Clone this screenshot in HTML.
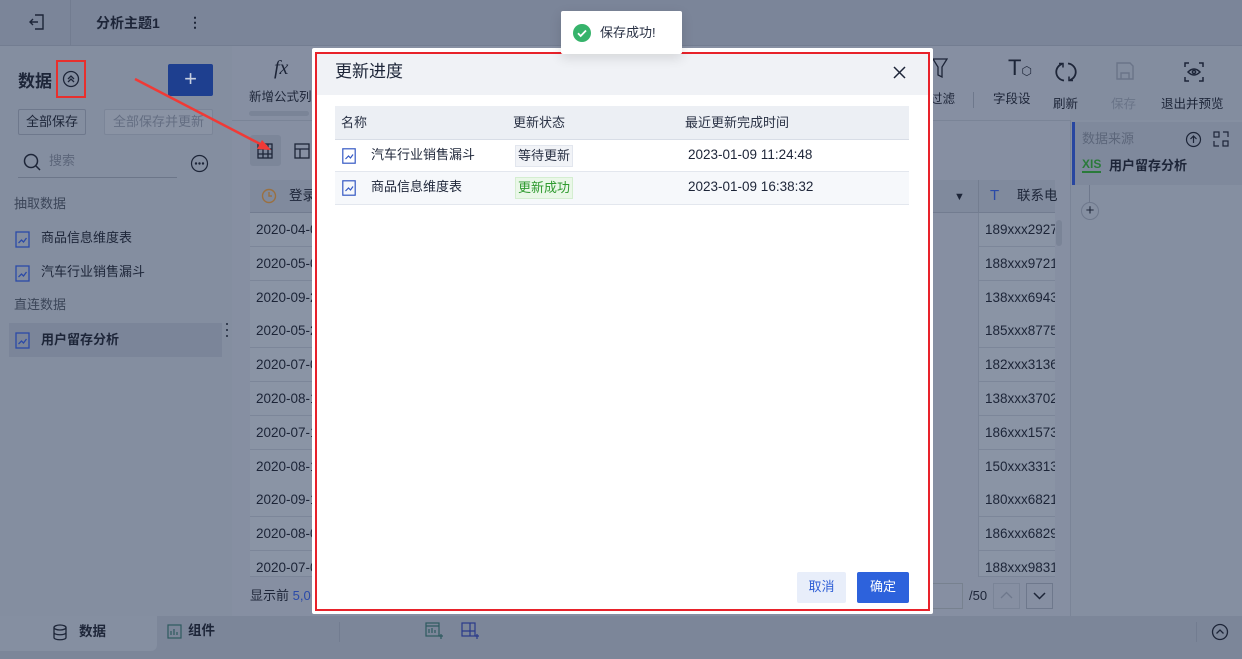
<!DOCTYPE html>
<html><head><meta charset="utf-8"><style>
*{margin:0;padding:0;box-sizing:border-box}
body{width:1242px;height:659px;overflow:hidden;position:relative;background:#838d9f;font-family:"Liberation Sans","Noto Sans CJK SC",sans-serif;font-size:13px;color:#1d2538}
.a{position:absolute;line-height:16px}
.top{left:0;top:0;width:1242px;height:46px;background:#7b8599;border-bottom:1px solid #737d91}
.left{left:0;top:46px;width:232px;height:570px;background:#848ea0}
.main{left:232px;top:46px;width:838px;height:570px;background:#868fa2}
.right{left:1070px;top:120px;width:172px;height:496px;background:#858fa1;border-left:1px solid #7a8497}
.bottom{left:0;top:616px;width:1242px;height:43px;background:#7c8699}
.cell{position:absolute;height:34px;border-bottom:1px solid #7c8699;background:#8a94a5;font-size:13.5px;line-height:33px;padding-left:6px;overflow:hidden;white-space:nowrap;color:#1c2437}
.tb{font-size:12.5px;color:#1d2538;text-align:center}
</style></head><body>
<div class="a top"></div>
<div class="a" style="left:70px;top:0;width:1px;height:46px;background:#727c90"></div>
<svg class="a" style="left:28px;top:13px" width="18" height="18" viewBox="0 0 18 18" fill="none" stroke="#1d2538" stroke-width="1.4"><path d="M7 2h8v14H7M2 9h8M5 6l-3 3 3 3"/></svg>
<div class="a" style="left:96px;top:15px;font-size:14px;font-weight:bold">分析主题1</div>
<div class="a" style="left:188px;top:14px;font-size:14px;font-weight:bold">⋮</div>

<div class="a left"></div>
<div class="a" style="left:18px;top:72px;font-size:17px;font-weight:bold;line-height:20px">数据</div>
<div class="a" style="left:56px;top:60px;width:30px;height:38px;border:2px solid #e8302d"></div>
<svg class="a" style="left:62px;top:70px" width="18" height="18" viewBox="0 0 18 18" fill="none" stroke="#1d2538" stroke-width="1.3"><circle cx="9" cy="9" r="7.5"/><path d="M6 9l3-3 3 3M6 12l3-3 3 3"/></svg>
<div class="a" style="left:168px;top:64px;width:45px;height:32px;background:#1e3f8f;border-radius:2px;color:#c8d0e0;font-size:22px;text-align:center;line-height:30px">+</div>
<div class="a" style="left:18px;top:109px;width:68px;height:26px;border:1px solid #6e788c;border-radius:2px;font-size:13px;line-height:23px;text-align:center">全部保存</div>
<div class="a" style="left:104px;top:109px;width:109px;height:26px;background:#8a93a4;border:1px solid #7b8598;border-radius:2px;font-size:13px;line-height:23px;text-align:center;color:#646e82">全部保存并更新</div>
<svg class="a" style="left:22px;top:152px" width="20" height="20" viewBox="0 0 20 20" fill="none" stroke="#1d2538" stroke-width="1.5"><circle cx="9" cy="9" r="6.5"/><path d="M14 14l4 4"/></svg>
<div class="a" style="left:49px;top:153px;color:#5c667a;font-size:13px">搜索</div>
<div class="a" style="left:18px;top:177px;width:159px;height:1px;background:#6c7689"></div>
<svg class="a" style="left:190px;top:154px" width="19" height="19" viewBox="0 0 19 19" fill="none" stroke="#1d2538" stroke-width="1.2"><circle cx="9.5" cy="9.5" r="8"/><circle cx="6" cy="9.5" r=".6" fill="#1d2538"/><circle cx="9.5" cy="9.5" r=".6" fill="#1d2538"/><circle cx="13" cy="9.5" r=".6" fill="#1d2538"/></svg>
<div class="a" style="left:14px;top:196px;color:#3b4558">抽取数据</div>
<svg class="a" style="left:15px;top:231px" width="15" height="17" viewBox="0 0 15 17" fill="none" stroke="#2b4aa8" stroke-width="1.3"><rect x="1" y="1" width="13" height="15"/><path d="M3.5 12l3-3 2 2 3-4"/></svg>
<div class="a" style="left:41px;top:230px">商品信息维度表</div>
<svg class="a" style="left:15px;top:265px" width="15" height="17" viewBox="0 0 15 17" fill="none" stroke="#2b4aa8" stroke-width="1.3"><rect x="1" y="1" width="13" height="15"/><path d="M3.5 12l3-3 2 2 3-4"/></svg>
<div class="a" style="left:41px;top:264px">汽车行业销售漏斗</div>
<div class="a" style="left:14px;top:297px;color:#3b4558">直连数据</div>
<div class="a" style="left:9px;top:323px;width:213px;height:34px;background:#7b8599"></div>
<svg class="a" style="left:15px;top:332px" width="15" height="17" viewBox="0 0 15 17" fill="none" stroke="#2b4aa8" stroke-width="1.3"><rect x="1" y="1" width="13" height="15"/><path d="M3.5 12l3-3 2 2 3-4"/></svg>
<div class="a" style="left:41px;top:332px;font-weight:bold">用户留存分析</div>
<svg class="a" style="left:225px;top:322px" width="10" height="16" fill="#1d2538"><circle cx="2" cy="2" r="1"/><circle cx="8" cy="2" r="1"/><circle cx="2" cy="8" r="1"/><circle cx="8" cy="8" r="1"/><circle cx="2" cy="14" r="1"/><circle cx="8" cy="14" r="1"/></svg>

<div class="a main"></div>
<div class="a" style="left:232px;top:120px;width:838px;height:1px;background:#7a8497"></div>
<div class="a" style="left:274px;top:58px;font-size:20px;font-style:italic;font-family:'Liberation Serif',serif;color:#1d2538;line-height:20px">fx</div>
<div class="a tb" style="left:249px;top:89px">新增公式列</div>
<div class="a" style="left:249px;top:111px;width:60px;height:5px;background:#7a8497;border-radius:3px"></div>
<div class="a" style="left:250px;top:135px;width:31px;height:31px;background:#7c8699;border-radius:3px"></div>
<svg class="a" style="left:257px;top:143px" width="16" height="16" viewBox="0 0 16 16" fill="none" stroke="#1d2538" stroke-width="1.3"><rect x="1" y="1" width="14" height="14"/><path d="M1 6h14M1 11h14M6 1v14M11 1v14"/></svg>
<svg class="a" style="left:294px;top:143px" width="16" height="16" viewBox="0 0 16 16" fill="none" stroke="#1d2538" stroke-width="1.3"><rect x="1" y="1" width="14" height="14"/><path d="M1 6h14M6 6v9"/></svg>
<div class="a" style="left:250px;top:180px;width:805px;height:33px;background:#808a9d;border-bottom:1px solid #727c90"></div>
<svg class="a" style="left:261px;top:188px" width="16" height="16" viewBox="0 0 16 16" fill="none" stroke="#9a7040" stroke-width="1.4"><circle cx="8" cy="8" r="6.5"/><path d="M8 4v4h3"/></svg>
<div class="a" style="left:289px;top:188px;font-size:13.5px">登录</div>
<div class="a" style="left:954px;top:189px;font-size:11px">▼</div>
<div class="a" style="left:978px;top:180px;width:1px;height:33px;background:#737d90"></div>
<div class="a" style="left:990px;top:188px;font-size:15px;color:#2b4aa8">T</div>
<div class="a" style="left:1017px;top:188px;font-size:13.5px">联系电</div>

<div class="cell" style="left:250px;top:213px;width:64px">2020-04-0</div>
<div class="cell" style="left:250px;top:247px;width:64px">2020-05-0</div>
<div class="cell" style="left:250px;top:281px;width:64px">2020-09-2</div>
<div class="cell" style="left:250px;top:314px;width:64px">2020-05-2</div>
<div class="cell" style="left:250px;top:348px;width:64px">2020-07-0</div>
<div class="cell" style="left:250px;top:382px;width:64px">2020-08-1</div>
<div class="cell" style="left:250px;top:416px;width:64px">2020-07-1</div>
<div class="cell" style="left:250px;top:450px;width:64px">2020-08-1</div>
<div class="cell" style="left:250px;top:483px;width:64px">2020-09-1</div>
<div class="cell" style="left:250px;top:517px;width:64px">2020-08-0</div>
<div class="cell" style="left:250px;top:551px;width:64px;height:26px">2020-07-0</div>

<div class="cell" style="left:979px;top:213px;width:76px">189xxx2927</div>
<div class="cell" style="left:979px;top:247px;width:76px">188xxx9721</div>
<div class="cell" style="left:979px;top:281px;width:76px">138xxx6943</div>
<div class="cell" style="left:979px;top:314px;width:76px">185xxx8775</div>
<div class="cell" style="left:979px;top:348px;width:76px">182xxx3136</div>
<div class="cell" style="left:979px;top:382px;width:76px">138xxx3702</div>
<div class="cell" style="left:979px;top:416px;width:76px">186xxx1573</div>
<div class="cell" style="left:979px;top:450px;width:76px">150xxx3313</div>
<div class="cell" style="left:979px;top:483px;width:76px">180xxx6821</div>
<div class="cell" style="left:979px;top:517px;width:76px">186xxx6829</div>
<div class="cell" style="left:979px;top:551px;width:76px;height:26px">188xxx9831</div>
<div class="a" style="left:978px;top:213px;width:1px;height:364px;background:#7a8497"></div>
<div class="a" style="left:1056px;top:220px;width:6px;height:26px;background:#7a8497;border-radius:3px"></div>
<div class="a" style="left:250px;top:588px;font-size:13px">显示前 <span style="color:#2b4aa8">5,0</span></div>
<div class="a" style="left:930px;top:583px;width:33px;height:26px;border:1px solid #77818f;border-left:none"></div>
<div class="a" style="left:969px;top:588px">/50</div>
<div class="a" style="left:993px;top:583px;width:27px;height:26px;border:1px solid #7a8497"></div>
<svg class="a" style="left:1000px;top:591px" width="13" height="8" fill="none" stroke="#6e788c" stroke-width="1.3"><path d="M1 7l5.5-5.5L12 7"/></svg>
<div class="a" style="left:1026px;top:583px;width:27px;height:26px;border:1px solid #6e788c"></div>
<svg class="a" style="left:1033px;top:592px" width="13" height="8" fill="none" stroke="#1d2538" stroke-width="1.5"><path d="M1 1l5.5 5.5L12 1"/></svg>

<svg class="a" style="left:932px;top:58px" width="16" height="20" viewBox="0 0 16 20" fill="none" stroke="#1d2538" stroke-width="1.3"><path d="M1 1h14l-5 8v10l-4-2V9z"/></svg>
<div class="a tb" style="left:930px;top:91px">过滤</div>
<div class="a" style="left:973px;top:92px;width:1px;height:16px;background:#6e788c"></div>
<div class="a" style="left:1008px;top:56px;font-size:22px;color:#1d2538;line-height:24px">T<span style="font-size:12px">⬡</span></div>
<div class="a tb" style="left:993px;top:91px">字段设</div>
<svg class="a" style="left:1055px;top:61px" width="22" height="22" viewBox="0 0 22 22" fill="none" stroke="#1d2538" stroke-width="1.8"><path d="M7 3A8.5 8.5 0 0 0 9 19.5M15 19A8.5 8.5 0 0 0 13 2.5"/><path d="M4 2.5h4v4M18 19.5h-4v-4" stroke-width="1.5"/></svg>
<div class="a tb" style="left:1053px;top:96px">刷新</div>
<svg class="a" style="left:1115px;top:61px" width="20" height="20" viewBox="0 0 20 20" fill="none" stroke="#6a7488" stroke-width="1.4"><path d="M2 2h13l3 3v13H2z"/><path d="M6 18v-6h8v6"/></svg>
<div class="a tb" style="left:1111px;top:96px;color:#6a7488">保存</div>
<svg class="a" style="left:1184px;top:62px" width="20" height="20" viewBox="0 0 20 20" fill="none" stroke="#1d2538" stroke-width="1.5"><path d="M1 5V1h4M15 1h4v4M19 15v4h-4M5 19H1v-4"/><path d="M4 10q6-6 12 0q-6 6-12 0z"/><circle cx="10" cy="10" r="1.6"/></svg>
<div class="a tb" style="left:1161px;top:96px">退出并预览</div>

<div class="a right"></div>
<div class="a" style="left:1072px;top:122px;width:170px;height:63px;background:#7f899c;border-left:3px solid #2846a0"></div>
<div class="a" style="left:1082px;top:131px;color:#5c667a;font-size:13px">数据来源</div>
<svg class="a" style="left:1185px;top:131px" width="17" height="17" viewBox="0 0 17 17" fill="none" stroke="#1d2538" stroke-width="1.2"><circle cx="8.5" cy="8.5" r="7"/><path d="M8.5 12V5M5.5 8l3-3 3 3"/></svg>
<svg class="a" style="left:1213px;top:131px" width="16" height="16" viewBox="0 0 16 16" fill="none" stroke="#1d2538" stroke-width="1.2"><rect x="1" y="1" width="5" height="5"/><rect x="10" y="10" width="5" height="5"/><path d="M10 1h5v5M1 10v5h5"/></svg>
<div class="a" style="left:1082px;top:158px;font-size:12px;color:#2a7a3a;font-weight:bold;border-bottom:2px solid #2a7a3a;line-height:13px">XIS</div>
<div class="a" style="left:1109px;top:158px;font-weight:bold">用户留存分析</div>
<div class="a" style="left:1089px;top:185px;width:1px;height:17px;background:#6e788c"></div>
<div class="a" style="left:1081px;top:202px;width:18px;height:18px;border:1px solid #6e788c;border-radius:50%;text-align:center;line-height:15px;font-size:15px">+</div>

<div class="a bottom"></div>
<div class="a" style="left:0;top:616px;width:157px;height:35px;background:#858fa1;border-radius:0 0 6px 0"></div>
<svg class="a" style="left:52px;top:624px" width="16" height="17" viewBox="0 0 16 17" fill="none" stroke="#1d2538" stroke-width="1.3"><ellipse cx="8" cy="3.5" rx="6" ry="2.5"/><path d="M2 3.5v10c0 3 12 3 12 0v-10M2 8.5c0 3 12 3 12 0"/></svg>
<div class="a" style="left:79px;top:624px;font-weight:bold;font-size:13.5px">数据</div>
<svg class="a" style="left:167px;top:624px" width="15" height="15" viewBox="0 0 15 15" fill="none" stroke="#2e5a60" stroke-width="1.2"><rect x="1" y="1" width="13" height="13"/><path d="M4 11V7M7 11V5M10 11V8"/></svg>
<div class="a" style="left:188px;top:623px;font-weight:bold;font-size:13.5px">组件</div>
<div class="a" style="left:339px;top:622px;width:1px;height:20px;background:#727c90"></div>
<svg class="a" style="left:425px;top:622px" width="18" height="18" viewBox="0 0 18 18" fill="none" stroke="#2e5a60" stroke-width="1.2"><rect x="1" y="1" width="13" height="13"/><path d="M1 4h13M4 11V7M7 11V6M10 11V8M14 14h4M16 12v5"/></svg>
<svg class="a" style="left:461px;top:622px" width="18" height="18" viewBox="0 0 18 18" fill="none" stroke="#2a3a8a" stroke-width="1.2"><rect x="1" y="1" width="13" height="13"/><path d="M1 9h13M9 1v13M14 14h4M16 12v5"/></svg>
<div class="a" style="left:1196px;top:622px;width:1px;height:20px;background:#727c90"></div>
<svg class="a" style="left:1211px;top:623px" width="18" height="18" viewBox="0 0 18 18" fill="none" stroke="#1d2538" stroke-width="1.3"><circle cx="9" cy="9" r="7.5"/><path d="M5.5 10.5L9 7l3.5 3.5"/></svg>

<svg class="a" style="left:0;top:0" width="320" height="170"><path d="M135 79L266 147" stroke="#f03a36" stroke-width="2.5"/><path d="M271 150l-14-1 5-9z" fill="#f03a36"/></svg>

<div class="a" style="left:312px;top:48px;width:621px;height:566px;background:#fff;border-radius:2px"></div>
<div class="a" style="left:315px;top:52px;width:615px;height:559px;border:2px solid #e8222a;background:#fff"></div>
<div class="a" style="left:317px;top:54px;width:611px;height:41px;background:#f0f2f6"></div>
<div class="a" style="left:335px;top:62px;font-size:17px;color:#1d2538;line-height:20px">更新进度</div>
<svg class="a" style="left:893px;top:66px" width="13" height="13" viewBox="0 0 13 13" stroke="#1d2538" stroke-width="1.5"><path d="M1 1l11 11M12 1L1 12"/></svg>
<div class="a" style="left:335px;top:106px;width:574px;height:34px;background:#eceff4;border-bottom:1px solid #d8dde6"></div>
<div class="a" style="left:341px;top:115px;color:#2a3245">名称</div>
<div class="a" style="left:513px;top:115px;color:#2a3245">更新状态</div>
<div class="a" style="left:685px;top:115px;color:#2a3245">最近更新完成时间</div>
<div class="a" style="left:335px;top:140px;width:574px;height:32px;border-bottom:1px solid #e3e7ee"></div>
<div class="a" style="left:335px;top:172px;width:574px;height:33px;background:#f6f8fb;border-bottom:1px solid #e3e7ee"></div>
<svg class="a" style="left:342px;top:148px" width="14" height="16" viewBox="0 0 14 16" fill="none" stroke="#3559c4" stroke-width="1.2"><rect x=".8" y=".8" width="12.4" height="14.4"/><path d="M3.5 11l3-3 2 2 2.5-3.5"/></svg>
<div class="a" style="left:371px;top:147px">汽车行业销售漏斗</div>
<div class="a" style="left:515px;top:145px;padding:2px 2px;background:#f1f3f7;border:1px solid #e2e6ee;font-size:13px;color:#2a3245;line-height:16px">等待更新</div>
<div class="a" style="left:688px;top:147px;font-size:13.5px">2023-01-09 11:24:48</div>
<svg class="a" style="left:342px;top:180px" width="14" height="16" viewBox="0 0 14 16" fill="none" stroke="#3559c4" stroke-width="1.2"><rect x=".8" y=".8" width="12.4" height="14.4"/><path d="M3.5 11l3-3 2 2 2.5-3.5"/></svg>
<div class="a" style="left:371px;top:179px">商品信息维度表</div>
<div class="a" style="left:515px;top:177px;padding:2px 2px;background:#eaf7e8;border:1px solid #d4eed0;font-size:13px;color:#2f9a2f;line-height:16px">更新成功</div>
<div class="a" style="left:688px;top:179px;font-size:13.5px">2023-01-09 16:38:32</div>
<div class="a" style="left:797px;top:572px;width:49px;height:31px;background:#e8eefa;border-radius:2px;color:#2f5fd6;line-height:30px;text-align:center">取消</div>
<div class="a" style="left:857px;top:572px;width:52px;height:31px;background:#2d62dc;border-radius:2px;color:#fff;line-height:30px;text-align:center">确定</div>

<div class="a" style="left:561px;top:11px;width:121px;height:43px;background:#fff;border-radius:2px;box-shadow:0 4px 12px rgba(0,0,0,.12)"></div>
<svg class="a" style="left:573px;top:24px" width="18" height="18" viewBox="0 0 18 18"><circle cx="9" cy="9" r="9" fill="#36b36b"/><path d="M5 9.3l2.7 2.7L13 6.5" stroke="#fff" stroke-width="1.8" fill="none"/></svg>
<div class="a" style="left:600px;top:25px;font-size:13px;color:#2a3245">保存成功!</div>
</body></html>
